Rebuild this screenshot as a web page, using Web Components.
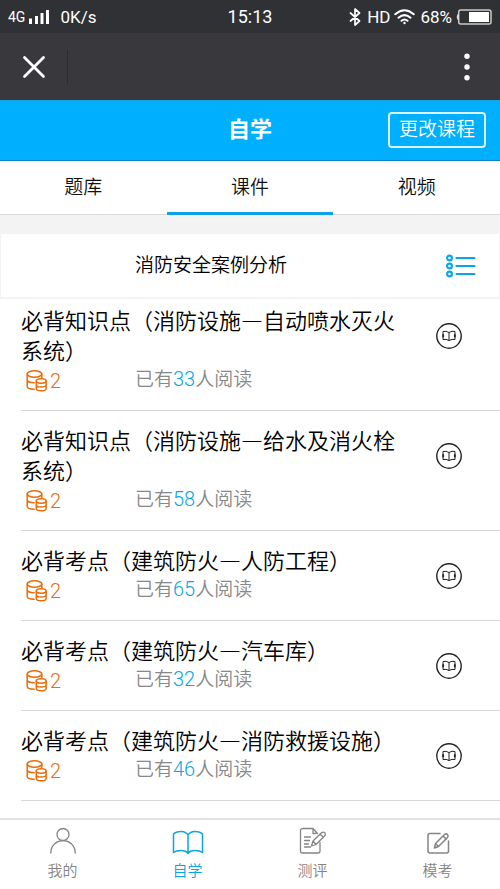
<!DOCTYPE html>
<html lang="zh-CN">
<head>
<meta charset="utf-8">
<meta name="viewport" content="width=device-width, initial-scale=1">
<title>自学</title>
<style>
  body { margin: 0; background: #fff; font-family: Roboto, "Noto Sans CJK SC", sans-serif; font-weight: 350; color: #111; }
</style>
</head>
<body>
<study-app></study-app>
<script>
const define = (name, html, setup) => customElements.define(name, class extends HTMLElement {
  constructor() {
    super();
    this.attachShadow({ mode: 'open' });
  }
  connectedCallback() {
    this.shadowRoot.innerHTML = '<style>*{box-sizing:border-box}svg{display:block;flex:none;fill:none;stroke:currentColor;stroke-linecap:round;stroke-linejoin:round}button{font:inherit;color:inherit;background:none;border:0;padding:0;margin:0;cursor:pointer}a{color:inherit;text-decoration:none}</style>' + html;
    if (setup) setup(this, this.shadowRoot);
  }
});

define('status-bar', `
<style>
  :host { display: grid; grid-template-columns: 1fr auto 1fr; align-items: center; height: 33px; padding: 0 8px; background: #303134; color: #fff; font-size: 17px; font-weight: 400; }
  .side { display: flex; align-items: center; }
  .net { font-size: 14px; margin-right: 4px; }
  .speed { margin-left: 10px; }
  .time { font-size: 18px; }
  .end { justify-content: flex-end; }
  .bt { margin-right: 6px; }
  .wifi { margin: 0 5px 0 4px; }
  .bat { margin-left: 4px; }
</style>
<div class="side"><span class="net">4G</span>
  <svg width="21" height="16" viewBox="0 0 21 16"><path stroke="none" fill="#fff" d="M0 9.500h3V15H0zM6 7h3v8H6zM11.500 4h3v11h-3zM17 1h3v14h-3z"/></svg>
  <span class="speed">0K/s</span></div>
<span class="time">15:13</span>
<div class="side end">
  <svg class="bt" width="12" height="18" viewBox="0 0 12 18" stroke-width="1.700"><path d="M1.500 5l9 8L6 17V1l4.500 4-9 8"/></svg>
  <span>HD</span>
  <svg class="wifi" width="21" height="16" viewBox="0 0 21 16" stroke-width="2"><path d="M1.200 5.200q9.300-8 18.600 0M4.500 8.700q6-5.200 12 0M7.500 11.800q3-2.500 6 0"/><circle cx="10.500" cy="14" r="1.200" fill="#fff" stroke="none"/></svg>
  <span>68%</span>
  <svg class="bat" width="36" height="16" viewBox="0 0 36 16"><rect x="2.700" y="1" width="32.300" height="14" rx="2" stroke="#c9c9c9" stroke-width="1.500"/><path d="M2 5.500Q0 8 2 10.500z" fill="#ddd" stroke="#ddd"/><path d="M13 3h20v10H13z" fill="#fff" stroke="none"/></svg>
</div>`);

define('web-bar', `
<style>
  :host { display: flex; align-items: center; height: 67px; padding: 0 17px 0 17px; background: #39393d; color: #fff; }
  button { display: grid; place-items: center; width: 33px; height: 44px; }
  hr { width: 1px; height: 34px; border: 0; background: #2b2b2e; margin: 0 auto 0 17px; }
</style>
<button aria-label="关闭"><svg width="24" height="24" viewBox="0 0 24 24" stroke-width="2.800"><path d="M2.500 2.500l19 19m0-19l-19 19"/></svg></button>
<hr>
<button aria-label="更多"><svg width="6" height="28" viewBox="0 0 6 28"><g fill="#fff" stroke="none"><circle cx="3" cy="3.300" r="2.700"/><circle cx="3" cy="14" r="2.700"/><circle cx="3" cy="24.700" r="2.700"/></g></svg></button>`);

define('page-header', `
<style>
  :host { display: grid; grid-template-columns: 1fr auto 1fr; align-items: center; height: 61px; padding: 0 14px 2px; background: #00b0ff; border-bottom: 1px solid #0a84c6; border-top: 1px solid #12a5dc; box-sizing: border-box; color: #fff; }
  h1 { grid-column: 2; margin: 0; font-size: 22px; line-height: 30px; font-weight: 700; }
  button { justify-self: end; height: 36px; padding: 0 9px; border: 2px solid #d9f3ff; border-radius: 4px; font-size: 19px; line-height: 28px; }
</style>
<h1><slot></slot></h1><button><slot name="action"></slot></button>`);

define('tab-strip', `
<style>
  :host { display: block; }
  nav { display: grid; grid-template-columns: repeat(3, 1fr); background: linear-gradient(#d9d9d9, #d9d9d9) bottom / 100% 1px no-repeat #fff; }
  ::slotted(a) { height: 54px; text-align: center; font-size: 19px; line-height: 54px; color: #111; text-decoration: none; box-sizing: border-box; }
  ::slotted(a[aria-current]) { border-bottom: 3px solid #0ba3e3; }
</style>
<nav><slot></slot></nav>`);

define('course-card', `
<style>
  :host { display: flex; align-items: center; height: 63px; margin: 19px 1px 2px; padding: 0 22px; background: #fff; }
  h2 { flex: 1; margin: 0 0 0 112px; font-size: 19px; line-height: 28px; font-weight: 350; color: #000; }
  button { color: #0ba5e6; }
</style>
<h2><slot></slot></h2>
<button aria-label="目录"><svg width="32" height="24" viewBox="0 0 32 24" stroke-width="2.200"><circle cx="4.500" cy="4" r="2.400"/><circle cx="4.500" cy="12" r="2.400"/><circle cx="4.500" cy="20" r="2.400"/><path d="M11.500 4h18m-18 8h18m-18 8h18"/></svg></button>`);

define('lesson-item', `
<style>
  :host { display: flex; align-items: flex-start; margin-left: 21px; padding: 13px 38px 21px 0; border-bottom: 1px solid #d8d8d8; }
  :host(:first-of-type) { padding-top: 5px; }
  .body { flex: 1; min-width: 0; }
  h3 { margin: 0 32px 1px 0; font-family: "Noto Sans CJK SC", sans-serif; font-size: 22px; line-height: 30px; font-weight: 350; color: #000; }
  .meta { display: grid; grid-template-columns: 114px 1fr; align-items: center; height: 24px; font-size: 19px; line-height: 24px; color: #888; }
  .cost { display: flex; align-items: center; gap: 3px; padding: 4px 0 0 5px; color: #e86c0a; font-size: 20px; }
  b { font-weight: 350; font-size: 20px; color: #0ba5e0; }
  .open { margin-top: 19px; color: #222; }
</style>
<div class="body">
  <h3><slot></slot></h3>
  <div class="meta">
    <span class="cost"><svg width="21" height="22" viewBox="0 0 21 22" stroke-width="1.500"><ellipse cx="8.500" cy="4" rx="7.300" ry="3.200"/><path d="M1.200 4v12.500c0 1.700 3 2.600 7 2.800M15.800 4v3.500M1.200 10c.4 1.700 3 2.700 7 2.700"/><ellipse cx="15.200" cy="11" rx="4.900" ry="2.200"/><path d="M10.300 11v7.500c0 3 9.800 3 9.800 0V11M10.300 14.700c0 3 9.800 3 9.800 0"/></svg><span class="n"></span></span>
    <span>已有<b></b>人阅读</span>
  </div>
</div>
<button class="open" aria-label="阅读"><svg width="26" height="26" viewBox="0 0 26 26"><circle cx="13" cy="13" r="12.200" stroke-width="1.400"/><path stroke-width="1" d="M13 9.500Q10 7.500 7 8.500v8q3-.800 6 1 3-1.800 6-1v-8q-3-1-6 1v8"/><path stroke-width="1.800" d="M7.200 12v1.500m11.600-1.500v1.500"/></svg></button>`,
(el, root) => {
  root.querySelector('.n').textContent = el.getAttribute('cost');
  root.querySelector('b').textContent = el.getAttribute('readers');
});

const icons = {
  me: '<svg width="28" height="28" viewBox="0 0 28 28" stroke-width="1.300"><circle cx="14" cy="7.500" r="6"/><path d="M1.800 26C2 9.500 26 9.500 26.200 26"/></svg>',
  book: '<svg width="32" height="28" viewBox="0 0 32 28" stroke-width="1.500"><path d="M16 8Q14 4.500 9 4.500T1.500 7v18.500Q4 23.500 9 23.500T16 26.500Q18 23.500 23 23.500t7.500 2V7Q28 4.500 23 4.500T16 8v18.500"/></svg>',
  review: '<svg width="28" height="28" viewBox="0 0 28 28" stroke-width="1.300"><path d="M18.500 6.500L14 1.500H3.500a2 2 0 0 0-2 2v20.500a2 2 0 0 0 2 2h15.500a2 2 0 0 0 2-2V15.500M14 1.500v5h3M5.500 10h6m-6 3.500h5m-5 3.500h4m-4 3h6"/><path d="M12.500 19l1.500-5L22.500 5.800q2-1.500 3.500.2 1 1.700-.5 3L17 17.500zM21 7l3.500 3.500M14 14l3 3.500"/></svg>',
  exam: '<svg width="28" height="28" viewBox="0 0 28 28" stroke-width="1.500"><path d="M16 6.500H6a2 2 0 0 0-2 2V24a2 2 0 0 0 2 2h16.500a2 2 0 0 0 2-2V14"/><path d="M10.500 21l1-4.500 9-9q1.700-1.300 3 0 1.200 1.500 0 3l-9 9zM19 9l3.300 3.300M11.500 16.500l3 3"/></svg>'
};
define('nav-item', `
<style>
  :host { display: block; flex: 1; color: #858585; }
  :host([active]) { color: #0ba5e0; }
  a { display: flex; flex-direction: column; align-items: center; gap: 5px; padding-top: 7px; font-size: 15px; line-height: 22px; }
</style>
<a href="#"><span class="icon"></span><slot></slot></a>`,
(el, root) => {
  root.querySelector('.icon').innerHTML = icons[el.getAttribute('icon')];
  if (el.hasAttribute('active')) root.querySelector('a').setAttribute('aria-current', 'page');
});

define('bottom-nav', `
<style>
  :host { display: block; margin-top: auto; background: #fff; border-top: 2px solid #e2e2e2; }
  nav { display: flex; padding-bottom: 7px; }
</style>
<nav><slot></slot></nav>`);

define('study-app', `
<style>
  :host { display: flex; flex-direction: column; min-height: 100vh; }
  .top { display: flow-root; background: #f3f3f3; }
</style>
<status-bar></status-bar>
<web-bar></web-bar>
<page-header>自学<span slot="action">更改课程</span></page-header>
<div class="top">
  <tab-strip><a href="#">题库</a><a href="#" aria-current="page">课件</a><a href="#">视频</a></tab-strip>
  <course-card>消防安全案例分析</course-card>
</div>
<main>
  <lesson-item cost="2" readers="33">必背知识点（消防设施—自动喷水灭火系统）</lesson-item>
  <lesson-item cost="2" readers="58">必背知识点（消防设施—给水及消火栓系统）</lesson-item>
  <lesson-item cost="2" readers="65">必背考点（建筑防火—人防工程）</lesson-item>
  <lesson-item cost="2" readers="32">必背考点（建筑防火—汽车库）</lesson-item>
  <lesson-item cost="2" readers="46">必背考点（建筑防火—消防救援设施）</lesson-item>
</main>
<bottom-nav>
  <nav-item icon="me">我的</nav-item>
  <nav-item icon="book" active>自学</nav-item>
  <nav-item icon="review">测评</nav-item>
  <nav-item icon="exam">模考</nav-item>
</bottom-nav>`);
</script>
</body>
</html>
